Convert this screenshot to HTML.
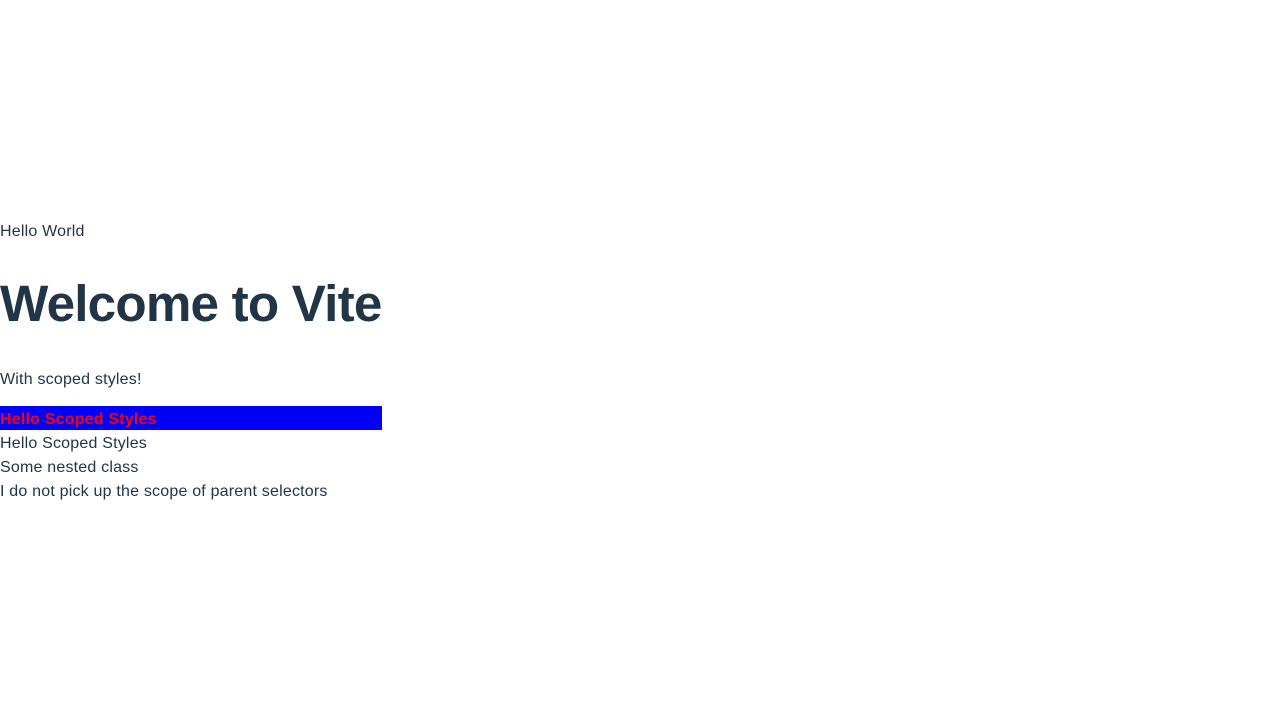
<!DOCTYPE html>
<html><head><style>
html,body{margin:0;padding:0;background:#fff;}
body{width:1280px;height:720px;position:relative;font-family:"Liberation Sans",sans-serif;color:#213547;font-size:16px;line-height:24px;letter-spacing:0.2px;}
.l{position:absolute;left:0;white-space:nowrap;}
h1{position:absolute;left:0;top:276px;margin:0;font-size:51.2px;line-height:56px;font-weight:bold;white-space:nowrap;letter-spacing:-0.8px;}
.bar{position:absolute;left:0;top:406px;width:382px;height:24px;background:#0000ff;color:#ff0000;font-weight:bold;}
.bar span{position:relative;top:2px;}
</style></head><body>
<div class="l" style="top:220px">Hello World</div>
<h1>Welcome to Vite</h1>
<div class="l" style="top:368px">With scoped styles!</div>
<div class="bar"><span>Hello Scoped Styles</span></div>
<div class="l" style="top:432px">Hello Scoped Styles</div>
<div class="l" style="top:456px">Some nested class</div>
<div class="l" style="top:480px">I do not pick up the scope of parent selectors</div>
</body></html>
